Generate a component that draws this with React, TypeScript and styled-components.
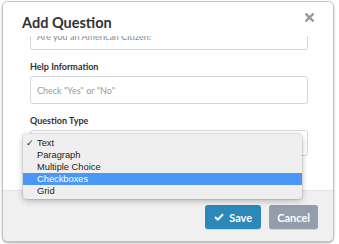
import React from 'react';
import styled, { createGlobalStyle } from 'styled-components';

const GlobalStyle = createGlobalStyle`
  html, body {
    margin: 0;
    padding: 0;
    background: #ffffff;
  }
  body {
    font-family: Lato, 'Open Sans', sans-serif;
  }
  * {
    box-sizing: border-box;
  }
`;

const Page = styled.div`
  width: 339px;
  height: 244px;
  padding: 1px 5px 2px 2px;
`;

const Modal = styled.div`
  position: relative;
  height: 100%;
  display: flex;
  flex-direction: column;
  background: #fff;
  border: 1px solid #c4c4c4;
  border-radius: 6px;
  box-shadow: 0 1px 2px rgba(0, 0, 0, 0.35);
  overflow: hidden;
`;

const Header = styled.div`
  position: relative;
  height: 34px;
  flex: none;
  padding: 13px 19px 0;
  background: #fff;
  z-index: 1;
`;

const Title = styled.h2`
  margin: 0;
  font-size: 14.5px;
  line-height: 16px;
  font-weight: 700;
  color: #333;
`;

const Close = styled.button`
  position: absolute;
  top: 11px;
  right: 19px;
  padding: 0;
  border: 0;
  background: none;
  display: flex;
  cursor: pointer;
`;

const Body = styled.div`
  flex: 1;
  padding: 0 25px 0 27px;
`;

// content scrolled a little: the first field slides under the header
const Scroller = styled.div`
  margin-top: -14px;
`;

const Label = styled.div`
  font-size: 9px;
  line-height: 11px;
  font-weight: 700;
  color: #333;
  margin: 11px 0 4px;
`;

const Input = styled.div<{ $placeholder?: boolean }>`
  height: 28px;
  border: 1px solid #d3d6dc;
  border-radius: 3px;
  padding: 0 6px;
  display: flex;
  align-items: center;
  font-size: 9px;
  color: ${p => (p.$placeholder ? '#9a9a9a' : '#8a8a8a')};
  background: #fff;
`;

const SelectWrap = styled.div`
  position: relative;
`;

const SelectBox = styled(Input)`
  height: 26px;
`;

const Menu = styled.ul`
  position: absolute;
  left: -7px;
  top: 4px;
  width: 279px;
  margin: 0;
  padding: 3px 0 2px;
  list-style: none;
  background: #efefef;
  border-radius: 4px;
  box-shadow: 0 0 0 0.5px rgba(0, 0, 0, 0.15), 0 2px 6px rgba(0, 0, 0, 0.25);
  font-family: 'Liberation Sans', Arial, sans-serif;
  font-size: 9.3px;
  z-index: 2;
`;

const Option = styled.li<{ $active?: boolean }>`
  position: relative;
  height: 12px;
  line-height: 12px;
  padding-left: 14px;
  color: ${p => (p.$active ? '#fff' : '#222')};
  background: ${p => (p.$active ? '#4a97f7' : 'transparent')};
`;

const Check = styled.span`
  position: absolute;
  left: 3px;
  top: 0;
`;

const Footer = styled.div`
  flex: none;
  height: 51px;
  background: #f0f0f0;
  border-top: 1px solid #e4e4e4;
  display: flex;
  justify-content: flex-end;
  align-items: flex-start;
  gap: 8px;
  padding: 14px 15px 0 0;
`;

const Button = styled.button<{ $variant: 'primary' | 'muted' }>`
  height: 24px;
  padding: 0 ${p => (p.$variant === 'primary' ? '9px' : '8px')};
  border: 0;
  border-radius: 3px;
  display: flex;
  align-items: center;
  gap: 5px;
  font-family: Lato, sans-serif;
  font-size: 11px;
  font-weight: 700;
  color: #fff;
  background: ${p => (p.$variant === 'primary' ? '#2b88b9' : '#939dab')};
  box-shadow: 0 1px 0 rgba(0, 0, 0, 0.12);
`;

const options = ['Text', 'Paragraph', 'Multiple Choice', 'Checkboxes', 'Grid'];

const App = () => (
  <>
    <GlobalStyle />
    <Page>
      <Modal>
        <Header>
          <Title>Add Question</Title>
          <Close aria-label="close">
            <svg width="9" height="9" viewBox="0 0 9 9">
              <path d="M1.3 1.3 L7.7 7.7 M7.7 1.3 L1.3 7.7" stroke="#9a9a9a" strokeWidth="2.4" strokeLinecap="square" />
            </svg>
          </Close>
        </Header>
        <Body>
          <Scroller>
            <Input>Are you an American Citizen!</Input>
            <Label>Help Information</Label>
            <Input $placeholder>Check "Yes" or "No"</Input>
            <Label>Question Type</Label>
            <SelectWrap>
              <SelectBox />
              <Menu>
                {options.map((o, i) => (
                  <Option key={o} $active={o === 'Checkboxes'}>
                    {i === 0 && <Check>✓</Check>}
                    {o}
                  </Option>
                ))}
              </Menu>
            </SelectWrap>
          </Scroller>
        </Body>
        <Footer>
          <Button $variant="primary">
            <svg width="10" height="8" viewBox="0 0 10 8">
              <path d="M1 4 L3.8 6.6 L9 1.2" stroke="#fff" strokeWidth="2" fill="none" />
            </svg>
            Save
          </Button>
          <Button $variant="muted">Cancel</Button>
        </Footer>
      </Modal>
    </Page>
  </>
);

export default App;
